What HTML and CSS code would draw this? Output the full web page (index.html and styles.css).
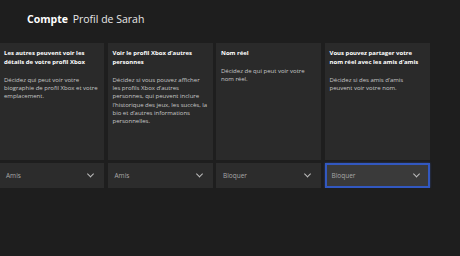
FILE: index.html
```html
<!DOCTYPE html>
<html lang="fr">
<head>
<meta charset="UTF-8">
<title>Profil de Sarah</title>
<link rel="stylesheet" href="styles.css">
</head>
<body>
  <div class="page-header">
    <span class="header-section">Compte</span>
    <span class="header-title">Profil de Sarah</span>
  </div>
  <div class="settings-row">
    <div class="setting">
      <div class="setting-card">
        <h3>Les autres peuvent voir les détails de votre profil Xbox</h3>
        <p>Décidez qui peut voir votre biographie de profil Xbox et votre emplacement.</p>
      </div>
      <button class="select">Amis <span class="chevron"></span></button>
    </div>
    <div class="setting">
      <div class="setting-card">
        <h3>Voir le profil Xbox d’autres personnes</h3>
        <p>Décidez si vous pouvez afficher les profils Xbox d’autres personnes, qui peuvent inclure l’historique des jeux, les succès, la bio et d’autres informations personnelles.</p>
      </div>
      <button class="select">Amis <span class="chevron"></span></button>
    </div>
    <div class="setting">
      <div class="setting-card">
        <h3>Nom réel</h3>
        <p>Décidez de qui peut voir votre nom réel.</p>
      </div>
      <button class="select">Bloquer <span class="chevron"></span></button>
    </div>
    <div class="setting">
      <div class="setting-card">
        <h3>Vous pouvez partager votre nom réel avec les amis d’amis</h3>
        <p>Décidez si des amis d’amis peuvent voir votre nom.</p>
      </div>
      <button class="select focused">Bloquer <span class="chevron"></span></button>
    </div>
  </div>
</body>
</html>
```
FILE: styles.css
```css
body {
  margin: 0;
  background-color: #1e1e1e;
  font-family: "Open Sans", "Noto Sans", sans-serif;
  color: #ffffff;
}
.page-header {
  padding: 11px 0 0 27px;
  height: 33px;
  box-sizing: border-box;
  font-size: 10.5px;
  line-height: 16px;
}
.header-section {
  font-weight: 700;
  margin-right: 2px;
}
.header-title {
  color: #e8e8e8;
}
.settings-row {
  display: flex;
  gap: 3.5px;
  margin-left: -1px;
  padding-top: 10px;
}
.setting {
  width: 105px;
  display: flex;
  flex-direction: column;
  gap: 3px;
}
.setting-card {
  background-color: #2a2a2a;
  height: 117px;
  padding: 6px 5px 0 5px;
  box-sizing: border-box;
}
.setting-card h3 {
  margin: 0 0 9px 0;
  font-size: 6px;
  line-height: 9px;
  font-weight: 700;
  color: #ffffff;
}
.setting-card p {
  margin: 0;
  font-size: 6px;
  line-height: 8.2px;
  color: #c8c8c8;
}
.select {
  display: flex;
  align-items: center;
  justify-content: space-between;
  height: 25px;
  padding: 0 9px 0 5px;
  border: 2px solid transparent;
  background-color: #2c2c2c;
  color: #a8a8a8;
  font-family: inherit;
  font-size: 6.5px;
  text-align: left;
}
.select.focused {
  border-color: #3258c0;
  background-color: #3a3a3a;
  box-shadow: 0 0 2px rgba(60, 100, 220, 0.5);
}
.chevron {
  width: 4px;
  height: 4px;
  border-right: 1px solid #bdbdbd;
  border-bottom: 1px solid #bdbdbd;
  transform: translateY(-1.5px) rotate(45deg);
}
```
